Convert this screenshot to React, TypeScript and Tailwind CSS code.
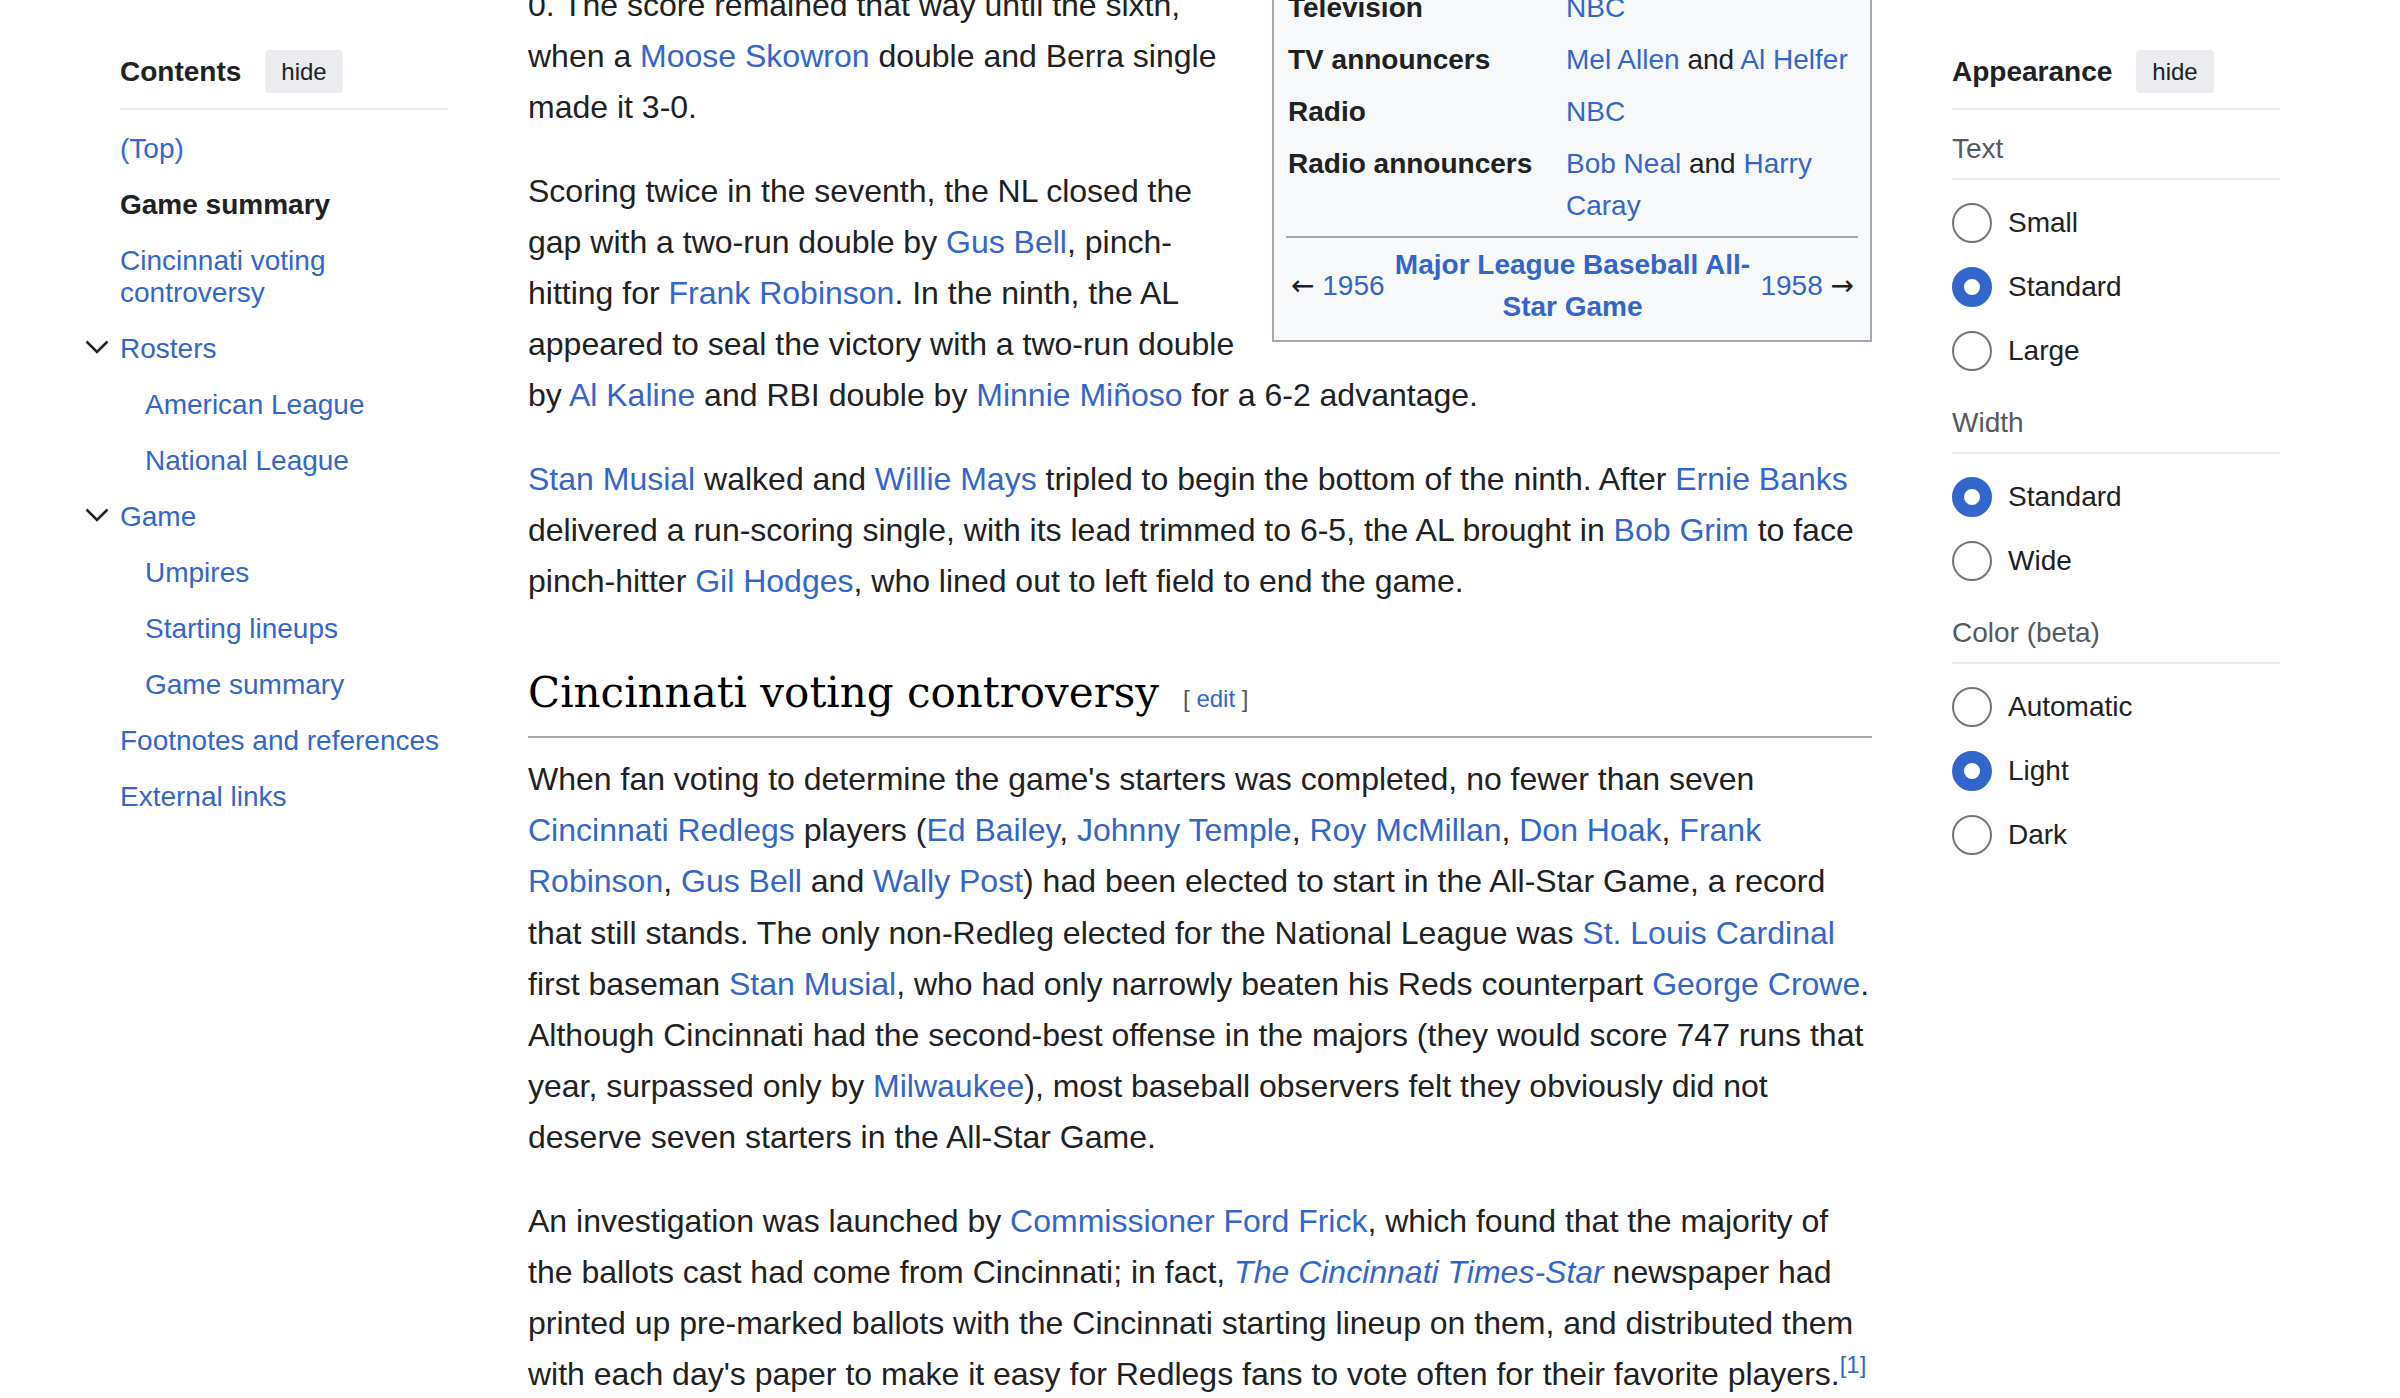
import type { ReactNode } from 'react';

const sans = "font-['Liberation_Sans',Arial,sans-serif]";

const toc = [
  { label: '(Top)', level: 1 },
  { label: 'Game summary', level: 1, active: true },
  { label: 'Cincinnati voting controversy', level: 1 },
  { label: 'Rosters', level: 1, toggle: true },
  { label: 'American League', level: 2 },
  { label: 'National League', level: 2 },
  { label: 'Game', level: 1, toggle: true },
  { label: 'Umpires', level: 2 },
  { label: 'Starting lineups', level: 2 },
  { label: 'Game summary', level: 2 },
  { label: 'Footnotes and references', level: 1 },
  { label: 'External links', level: 1 },
];

const appearance = [
  { title: 'Text', options: ['Small', 'Standard', 'Large'], value: 'Standard' },
  { title: 'Width', options: ['Standard', 'Wide'], value: 'Standard' },
  { title: 'Color (beta)', options: ['Automatic', 'Light', 'Dark'], value: 'Light' },
];

const infobox = [
  { label: 'Television', value: <A>NBC</A> },
  { label: 'TV announcers', value: <><A>Mel Allen</A> and <A>Al Helfer</A></> },
  { label: 'Radio', value: <A>NBC</A> },
  { label: 'Radio announcers', value: <><A>Bob Neal</A> and <A>Harry Caray</A></> },
];

function A({ children, italic }: { children: ReactNode; italic?: boolean }) {
  return (
    <a href="#" className={italic ? 'text-[#3366cc] italic' : 'text-[#3366cc]'}>
      {children}
    </a>
  );
}

function SideHeader({ title }: { title: string }) {
  return (
    <div className="mt-[50px] border-b-2 border-[#eaecf0] pb-[15px]">
      <div className="flex h-[43px] items-center gap-[24px]">
        <span className="text-[28px] font-bold text-[#202122]">{title}</span>
        <button className="h-[43px] rounded-[4px] bg-[#eaecf0] px-[16px] text-[24px] text-[#202122]">hide</button>
      </div>
    </div>
  );
}

function Radio({ label, checked }: { label: string; checked: boolean }) {
  return (
    <div className="flex h-[64px] items-center gap-[16px]">
      <span
        className={
          checked
            ? 'h-[40px] w-[40px] shrink-0 rounded-full border-[12px] border-[#3366cc] bg-white'
            : 'h-[40px] w-[40px] shrink-0 rounded-full border-2 border-[#72777d] bg-white'
        }
      />
      <span className="text-[28px] text-[#202122]">{label}</span>
    </div>
  );
}

export default function App() {
  return (
    <div className={`flex h-[1398px] items-start gap-[80px] overflow-hidden bg-white px-[120px] ${sans}`}>
      {/* Contents */}
      <nav className="w-[328px] shrink-0">
        <SideHeader title="Contents" />
        <ul className="pt-[11px]">
          {toc.map((item, i) => (
            <li
              key={i}
              className={`relative py-[12px] text-[28px] leading-[32px] ${item.level === 2 ? 'pl-[25px]' : ''}`}
            >
              {item.toggle && (
                <svg className="absolute left-[-35px] top-[19px]" width="24" height="14" viewBox="0 0 24 14">
                  <polyline points="1.5,1.5 12,12 22.5,1.5" fill="none" stroke="#202122" strokeWidth="2.5" />
                </svg>
              )}
              {item.active ? (
                <span className="font-bold text-[#202122]">{item.label}</span>
              ) : (
                <A>{item.label}</A>
              )}
            </li>
          ))}
        </ul>
      </nav>

      {/* Article */}
      <main className="-mt-[20px] w-[1344px] shrink-0 text-[32px] leading-[1.6] text-[#202122]">
        <aside className="float-right mb-[14px] ml-[28px] w-[600px] border-2 border-[#a2a9b1] bg-[#f8f9fa] px-[12px] text-[28px] leading-[42px]">
          <div className="grid grid-cols-[280px_1fr]">
            {infobox.map((row) => (
              <div key={row.label} className="contents">
                <div className="py-[5px] pl-[2px] font-bold">{row.label}</div>
                <div className="py-[5px]">{row.value}</div>
              </div>
            ))}
          </div>
          <div className="mt-[4px] flex items-center border-t-2 border-[#a2a9b1] pb-[12px] pt-[6px]">
            <div className="whitespace-nowrap pl-[5px]">
              <span className="font-['DejaVu_Sans',sans-serif]">←</span> <A>1956</A>
            </div>
            <div className="flex-1 text-center font-bold">
              <A>Major League Baseball All-Star Game</A>
            </div>
            <div className="whitespace-nowrap pr-[4px]">
              <A>1958</A> <span className="font-['DejaVu_Sans',sans-serif]">→</span>
            </div>
          </div>
        </aside>

        <p className="mb-[32px]">
          0. The score remained that way until the sixth, when a <A>Moose Skowron</A> double and Berra single made it
          3-0.
        </p>
        <p className="mb-[32px]">
          Scoring twice in the seventh, the NL closed the gap with a two-run double by <A>Gus Bell</A>, pinch-hitting
          for <A>Frank Robinson</A>. In the ninth, the AL appeared to seal the victory with a two-run double by{' '}
          <A>Al Kaline</A> and RBI double by <A>Minnie Miñoso</A> for a 6-2 advantage.
        </p>
        <p>
          <A>Stan Musial</A> walked and <A>Willie Mays</A> tripled to begin the bottom of the ninth. After{' '}
          <A>Ernie Banks</A> delivered a run-scoring single, with its lead trimmed to 6-5, the AL brought in{' '}
          <A>Bob Grim</A> to face pinch-hitter <A>Gil Hodges</A>, who lined out to left field to end the game.
        </p>

        <h2 className="mt-[53px] border-b-2 border-[#a2a9b1] pb-[10px] font-['DejaVu_Serif',Georgia,serif] text-[42px] font-normal leading-[66px] text-[#000]">
          Cincinnati voting controversy
          <span className={`ml-[24px] text-[24px] leading-[24px] text-[#54595d] ${sans}`}>
            [ <A>edit</A> ]
          </span>
        </h2>

        <p className="mb-[32px] mt-[16px]">
          When fan voting to determine the game's starters was completed, no fewer than seven{' '}
          <A>Cincinnati Redlegs</A> players (<A>Ed Bailey</A>, <A>Johnny Temple</A>, <A>Roy McMillan</A>,{' '}
          <A>Don Hoak</A>, <A>Frank Robinson</A>, <A>Gus Bell</A> and <A>Wally Post</A>) had been elected to start in
          the All-Star Game, a record that still stands. The only non-Redleg elected for the National League was{' '}
          <A>St. Louis Cardinal</A> first baseman <A>Stan Musial</A>, who had only narrowly beaten his Reds counterpart{' '}
          <A>George Crowe</A>. Although Cincinnati had the second-best offense in the majors (they would score 747 runs
          that year, surpassed only by <A>Milwaukee</A>), most baseball observers felt they obviously did not deserve
          seven starters in the All-Star Game.
        </p>
        <p>
          An investigation was launched by <A>Commissioner Ford Frick</A>, which found that the majority of the ballots
          cast had come from Cincinnati; in fact, <A italic>The Cincinnati Times-Star</A> newspaper had printed up
          pre-marked ballots with the Cincinnati starting lineup on them, and distributed them with each day's paper to
          make it easy for Redlegs fans to vote often for their favorite players.
          <sup>
            <A>[1]</A>
          </sup>
        </p>
      </main>

      {/* Appearance */}
      <aside className="w-[328px] shrink-0">
        <SideHeader title="Appearance" />
        {appearance.map((section, i) => (
          <div key={section.title}>
            <div
              className={`border-b-2 border-[#eaecf0] pb-[13px] text-[28px] leading-[32px] text-[#54595d] ${i === 0 ? 'pt-[23px]' : 'pt-[24px]'}`}
            >
              {section.title}
            </div>
            <div className="pt-[11px]">
              {section.options.map((opt) => (
                <Radio key={opt} label={opt} checked={opt === section.value} />
              ))}
            </div>
          </div>
        ))}
      </aside>
    </div>
  );
}
